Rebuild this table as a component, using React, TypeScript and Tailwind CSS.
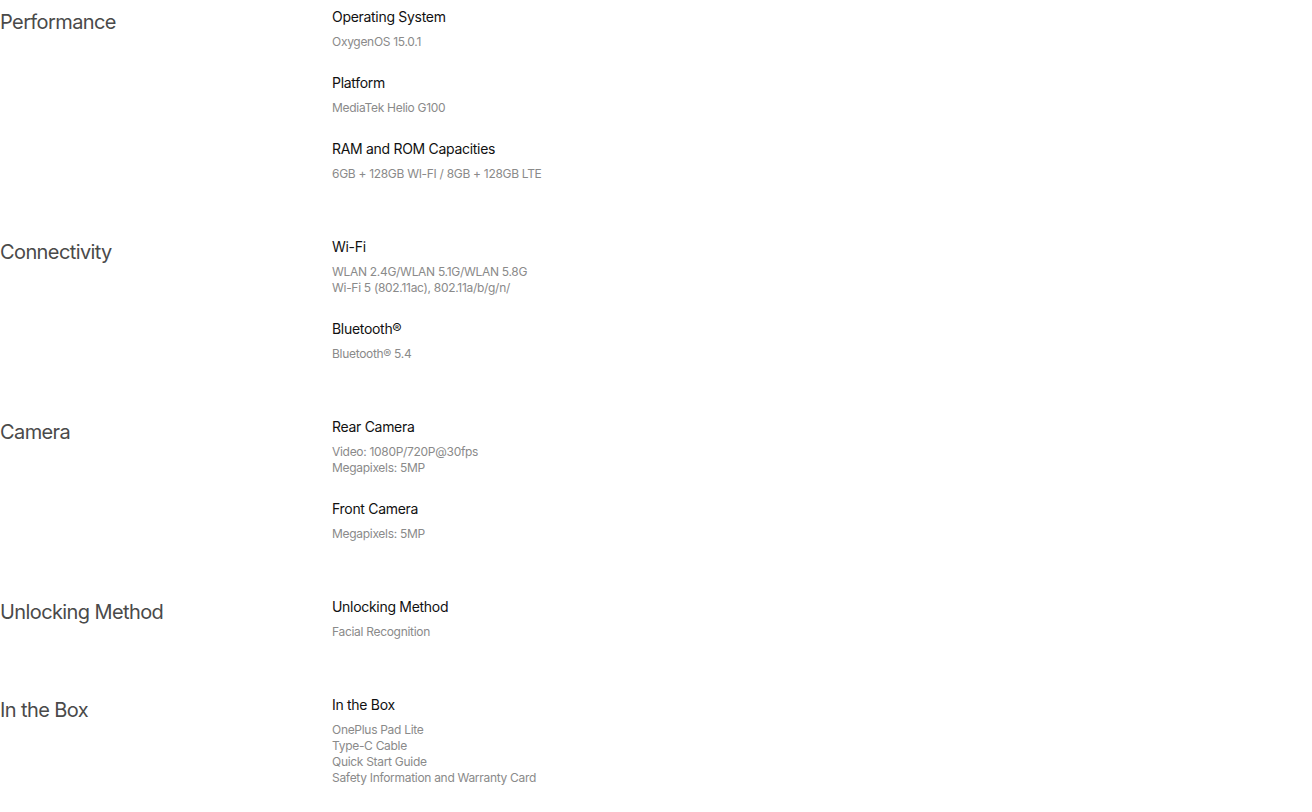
type Spec = { title: string; values: string[] };
type Section = { title: string; specs: Spec[] };

const SECTIONS: Section[] = [
  {
    title: "Performance",
    specs: [
      { title: "Operating System", values: ["OxygenOS 15.0.1"] },
      { title: "Platform", values: ["MediaTek Helio G100"] },
      { title: "RAM and ROM Capacities", values: ["6GB + 128GB WI-FI / 8GB + 128GB LTE"] },
    ],
  },
  {
    title: "Connectivity",
    specs: [
      { title: "Wi-Fi", values: ["WLAN 2.4G/WLAN 5.1G/WLAN 5.8G", "Wi-Fi 5 (802.11ac), 802.11a/b/g/n/"] },
      { title: "Bluetooth®", values: ["Bluetooth® 5.4"] },
    ],
  },
  {
    title: "Camera",
    specs: [
      { title: "Rear Camera", values: ["Video: 1080P/720P@30fps", "Megapixels: 5MP"] },
      { title: "Front Camera", values: ["Megapixels: 5MP"] },
    ],
  },
  {
    title: "Unlocking Method",
    specs: [{ title: "Unlocking Method", values: ["Facial Recognition"] }],
  },
  {
    title: "In the Box",
    specs: [
      {
        title: "In the Box",
        values: ["OnePlus Pad Lite", "Type-C Cable", "Quick Start Guide", "Safety Information and Warranty Card"],
      },
    ],
  },
];

export default function App() {
  return (
    <div className="min-h-screen bg-white pt-[7px] font-['Inter',sans-serif]">
      <div className="flex flex-col gap-[55px]">
        {SECTIONS.map((section) => (
          <section key={section.title} className="flex items-start">
            <h2 className="w-[332px] shrink-0 text-[20px] leading-[30px] tracking-[-0.6px] text-[#4a4a4a]">
              {section.title}
            </h2>
            <div className="flex flex-col gap-[23px]">
              {section.specs.map((spec) => (
                <div key={spec.title} className="flex flex-col gap-[7px]">
                  <h3 className="text-[14px] leading-[20px] tracking-[-0.3px] text-[#111]">{spec.title}</h3>
                  <div className="text-[12px] leading-[16px] tracking-[-0.3px] text-[#8a8a8a]">
                    {spec.values.map((v) => (
                      <p key={v}>{v}</p>
                    ))}
                  </div>
                </div>
              ))}
            </div>
          </section>
        ))}
      </div>
    </div>
  );
}
